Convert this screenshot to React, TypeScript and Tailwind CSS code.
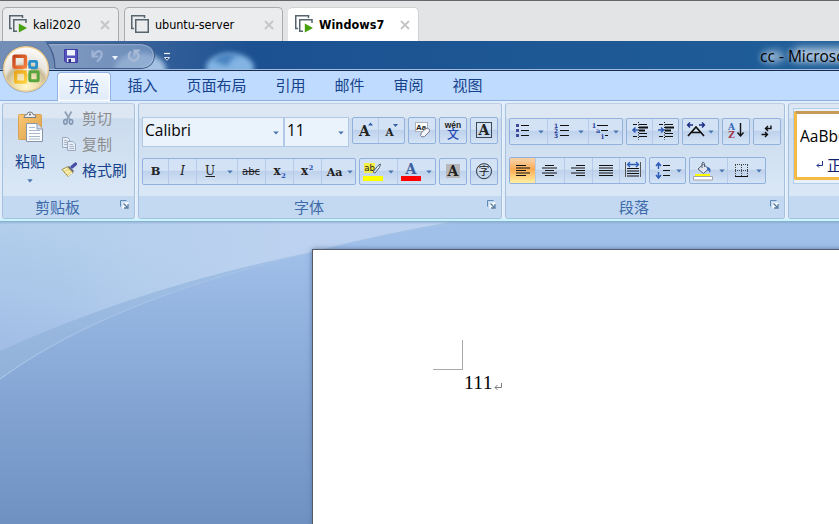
import React from "react";

const CJK = "font-['Noto_Sans_CJK_SC',sans-serif]";
const UI = "font-['Open_Sans','Noto_Sans_CJK_SC',sans-serif]";

/* ---------- virtual machine tab strip ---------- */

function VmIcon({ running }: { running?: boolean }) {
  return (
    <svg width="19" height="19" viewBox="0 0 19 19" fill="none" className="shrink-0">
      <path d="M13.5 3V.75H.75V13.5H3" stroke="#56646e" strokeWidth="1.5" />
      {running ? (
        <>
          <path d="M17 8V4.75H4.75V16.25H8" stroke="#56646e" strokeWidth="1.5" />
          <path d="M9.8 8.6L18 13.1L9.8 17.6Z" fill="#46a010" />
        </>
      ) : (
        <path d="M4.75 4.75H17.25V17.25H4.75Z" stroke="#56646e" strokeWidth="1.5" />
      )}
    </svg>
  );
}

function VmTab({ name, width, running, active }: { name: string; width: string; running?: boolean; active?: boolean }) {
  return (
    <div
      className={`flex h-[34px] items-center rounded-t-[5px] border border-b-0 pl-[6px] pr-2 ${width} ${
        active ? "border-[#d2d2d2] border-l-white bg-white" : "border-[#a9abad] bg-[#ebecee]"
      }`}
    >
      <VmIcon running={running} />
      <span
        className={`ml-[5px] flex-1 whitespace-nowrap font-['DejaVu_Sans_Condensed','DejaVu_Sans',sans-serif] text-[12.5px] leading-4 text-black [font-stretch:condensed] ${
          active ? "font-bold tracking-[0.05px]" : "tracking-[-0.05px]"
        }`}
      >
        {name}
      </span>
      <svg width="10" height="10" viewBox="0 0 10 10" className="shrink-0">
        <path d="M1 1L9 9M9 1L1 9" stroke="#c6c6c6" strokeWidth="1.9" />
      </svg>
    </div>
  );
}

/* ---------- title bar ---------- */

function OfficeButton() {
  return (
    <svg width="50" height="50" viewBox="0 0 50 50" className="absolute left-[1px] top-[44px] z-10">
      <defs>
        <radialGradient id="orb" cx=".5" cy=".88" r=".9">
          <stop offset="0" stopColor="#fff8cc" />
          <stop offset=".3" stopColor="#eedfae" />
          <stop offset=".5" stopColor="#c9bb98" />
          <stop offset=".6" stopColor="#e9e5dc" />
          <stop offset="1" stopColor="#ffffff" />
        </radialGradient>
        <linearGradient id="red" x2="1" y2="1">
          <stop stopColor="#c2431a" />
          <stop offset="1" stopColor="#f6813c" />
        </linearGradient>
        <linearGradient id="yel" x2="1" y2="1">
          <stop stopColor="#e9a51b" />
          <stop offset="1" stopColor="#ffd23c" />
        </linearGradient>
      </defs>
      <circle cx="25" cy="25" r="23.6" fill="#5f6f86" opacity=".55" />
      <circle cx="25" cy="25" r="22.3" fill="url(#orb)" stroke="#efcf92" strokeWidth="1.4" />
      <g fill="none">
        <rect x="13" y="12.3" width="11.4" height="11" rx="1" stroke="url(#red)" strokeWidth="3.4" />
        <rect x="28.6" y="17.4" width="7" height="6.4" rx=".8" stroke="#268fcc" strokeWidth="2.8" />
        <rect x="14.6" y="28" width="10" height="10.2" rx="1" stroke="url(#yel)" strokeWidth="3.3" />
        <rect x="28.8" y="27.8" width="8.4" height="9" rx="1" stroke="#57a53c" strokeWidth="3" />
      </g>
      <path d="M22.4 25.4H30M26.6 21.5V30" stroke="#f8efd6" strokeWidth="1.3" />
    </svg>
  );
}

function TitleBar() {
  return (
    <div className="relative flex h-[30px] shrink-0 items-center overflow-hidden border-b border-[#1a2c4c] bg-gradient-to-r from-[#5576a6] via-[#1c5191] via-30% to-[#1f5e98]">
      <svg className="absolute inset-0" width="839" height="29" viewBox="0 0 839 29">
        <defs>
          <filter id="soft" x="-50%" y="-50%" width="200%" height="200%">
            <feGaussianBlur stdDeviation="2.6" />
          </filter>
          <filter id="glow" x="-20%" y="-80%" width="140%" height="260%">
            <feGaussianBlur stdDeviation="5" />
          </filter>
          <linearGradient id="haze">
            <stop stopColor="#8aa0c4" stopOpacity=".85" />
            <stop offset="1" stopColor="#86a3cb" stopOpacity=".65" />
          </linearGradient>
        </defs>
        <path d="M0 0H45C51 8 54 18 55 28H0Z" fill="#8098bd" opacity=".7" />
        <ellipse cx="140" cy="29" rx="26" ry="17" fill="#b9d4f0" opacity=".85" filter="url(#soft)" />
        <ellipse cx="230" cy="27" rx="24" ry="15" fill="#8ebfec" opacity=".9" filter="url(#soft)" />
        <path d="M213 20Q223 9 239 15Q229 18 228 25" fill="#2f6db0" opacity=".7" filter="url(#soft)" />
        <path d="M47 2.5H141Q155 4 154.5 15Q154 26 142 27.5H55Q55 11 47 2.5Z" fill="url(#haze)" stroke="#3f5c88" />
        <path d="M50 3.7H141Q153.5 5 153.3 15Q153 25 142 26.3" fill="none" stroke="#b7cae4" strokeOpacity=".5" />
        <path d="M0 28.5H839" stroke="#9eb9df" />
        {/* save */}
        <path d="M64.5 8.5H77.5V21.5H66L64.5 20Z" fill="#5453bd" stroke="#3f3fa6" />
        <path d="M67 9H75V14.5H67Z" fill="#eef3ff" />
        <path d="M67 17H75V21H67Z" fill="#e4e6f4" />
        <path d="M68.5 18H71V21H68.5Z" fill="#29297c" />
        {/* undo */}
        <path d="M92.5 9.5V15.5H98.5M93 15Q98 7.5 101.5 11.5Q103 15.5 97 20.5" fill="none" stroke="#a0b4d6" strokeWidth="2.2" />
        <path d="M112 15H118L115 19Z" fill="#eef3fa" />
        {/* redo */}
        <path d="M131 10.5Q127.5 14 129.5 17.5Q133 21 137 18.5Q140.5 14.5 136 10.5M134.5 14.5V9.5H140" fill="none" stroke="#a9bad6" strokeWidth="2.2" />
        <path d="M164 12.5H170" stroke="#f0f4fa" strokeWidth="1.2" />
        <path d="M164.5 16.5H169.5L167 19.3Z" fill="#183861" stroke="#f0f4fa" strokeWidth=".9" />
        {/* glow under the window caption */}
        <path d="M765 11H782V20H765ZM794 7H850V20H794Z" fill="#cfdeee" opacity=".85" filter="url(#glow)" />
      </svg>
      <span className={`relative ml-[760px] whitespace-nowrap text-[15.5px] leading-5 text-black ${UI} [text-shadow:0_0_4px_#b5cce4]`}>
        cc - Microsoft Word
      </span>
    </div>
  );
}

/* ---------- ribbon building blocks ---------- */

const tabs = [
  { label: "插入", width: "w-[59px]" },
  { label: "页面布局", width: "w-[89px]" },
  { label: "引用", width: "w-[59px]" },
  { label: "邮件", width: "w-[59px]" },
  { label: "审阅", width: "w-[59px]" },
  { label: "视图", width: "w-[59px]" },
];

function RibbonTabs() {
  return (
    <div className={`flex h-[30px] shrink-0 items-end border-b border-[#8db2e3] bg-[#bfdbff] pl-[57px] text-[15px] text-[#15428b] ${CJK}`}>
      <div className="-mb-px flex h-[29px] w-[54px] items-center justify-center rounded-t-[4px] border border-b-0 border-[#8db2e3] bg-gradient-to-b from-[#f4f9ff] to-[#dfeaf8] pb-[2px] shadow-[inset_0_0_2px_1px_#ffffff]">
        开始
      </div>
      <div className="flex h-[29px] pl-[2px]">
        {tabs.map((t) => (
          <div key={t.label} className={`flex items-center justify-center whitespace-nowrap ${t.width}`}>
            {t.label}
          </div>
        ))}
      </div>
    </div>
  );
}

function Launcher() {
  return (
    <svg width="9" height="9" viewBox="0 0 9 9" className="absolute right-[5px] top-[4px]">
      <path d="M.5 6.5V.5H6.5" fill="none" stroke="#5f8bb5" />
      <path d="M2.5 2.5H8.5V8.5H2.5Z" fill="#fff" />
      <path d="M3.5 3.5L7 7M8 4V8H4" fill="none" stroke="#52789f" strokeWidth="1.3" />
    </svg>
  );
}

function Panel({ label, width, launcher, shift, children }: { label: string; width: string; launcher?: boolean; shift?: string; children: React.ReactNode }) {
  return (
    <section
      className={`flex h-[116px] shrink-0 flex-col overflow-hidden rounded-[3px] border border-[#a5c1dd] border-t-[#bccfe2] bg-gradient-to-b from-[#dce7f3] from-[12%] via-[#cbdbee] via-[13%] to-[#dae8f6] to-[82%] shadow-[1px_0_0_#eaf3fc] ${width}`}
    >
      <div className="h-[92px] shrink-0">{children}</div>
      <div className={`relative flex flex-1 items-center justify-center bg-[#c2d9f1] pb-[2px] text-[15px] leading-none text-[#3e6aaa] ${CJK}`}>
        <span className={shift}>{label}</span>
        {launcher && <Launcher />}
      </div>
    </section>
  );
}

function Cluster({ children }: { children: React.ReactNode }) {
  return (
    <div className="flex h-[27px] shrink-0 divide-x divide-[#b5cae8] overflow-hidden rounded-[2px] border border-[#92b1dc] bg-gradient-to-b from-[#d3e2f4] from-45% via-[#bfd2ec] via-50% to-[#d4e4f6]">
      {children}
    </div>
  );
}

/* One ribbon button; its glyph is drawn on a canvas as large as the button. */
function Tool({ w, active, arrow, children }: { w: number; active?: boolean; arrow?: number; children: React.ReactNode }) {
  return (
    <button className={`block h-[25px] shrink-0 ${active ? "bg-gradient-to-b from-[#f8cc9c] from-10% via-[#fbab50] via-45% to-[#fff0a2]" : ""}`}>
      <svg width={w} height="25" viewBox={`0 0 ${w} 25`} fill="none" className="block">
        {children}
        {arrow !== undefined && <path d={`M${arrow - 2.7} 11.5H${arrow + 2.7}L${arrow} 14.6Z`} fill="#4776b0" />}
      </svg>
    </button>
  );
}

const SERIF = "'DejaVu Serif', 'Liberation Serif', serif";

function Glyph({ x, y, size, fill = "#222", family = SERIF, weight = 700, italic, children }: { x: number; y: number; size: number; fill?: string; family?: string; weight?: number; italic?: boolean; children: string }) {
  return (
    <text x={x} y={y} fontSize={size} fill={fill} fontFamily={family} fontWeight={weight} fontStyle={italic ? "italic" : undefined} textAnchor="middle">
      {children}
    </text>
  );
}

function lines(rows: [number, number][]) {
  return rows.map(([a, b], i) => `M${a} ${7.5 + i * 2.5}H${b}`).join("");
}

/* ---------- clipboard ---------- */

function Clipboard() {
  return (
    <Panel label="剪贴板" width="w-[133px]" launcher shift="-translate-x-[11px]">
      <div className={`flex h-full text-[15px] text-[#15428b] ${CJK}`}>
        <div className="flex w-[53px] flex-col items-center pl-[1px] pt-[7px]">
          <svg width="30" height="32" viewBox="0 0 30 32" className="translate-x-[2px]">
            <defs>
              <linearGradient id="board" x2="1" y2="1">
                <stop stopColor="#fbc875" />
                <stop offset="1" stopColor="#dba048" />
              </linearGradient>
            </defs>
            <rect x="1.5" y="3.5" width="23" height="25" rx="1" fill="url(#board)" stroke="#d5a454" />
            <path d="M7 6.5Q7 3.5 10 3.5Q10 1 13 1Q16 1 16 3.5Q19 3.5 19 6.5Z" fill="#eeeeef" stroke="#777e87" />
            <circle cx="13" cy="3.4" r="1" fill="#5e646b" />
            <path d="M9.5 12.5H20L25.5 18V30.5H9.5Z" fill="#fafcff" stroke="#8795aa" />
            <path d="M20 12.5V18H25.5" fill="#d6e1f0" stroke="#8795aa" />
            <path d="M12 16.5H18M12 19.5H23M12 22.5H23M12 25.5H23M12 28H23" stroke="#a9b7ca" />
          </svg>
          <span className="mt-[7px] leading-[22px]">粘贴</span>
          <svg width="6" height="4" viewBox="0 0 6 4" className="mt-[7px]">
            <path d="M.3 .3H5.7L3 3.5Z" fill="#4776b0" />
          </svg>
        </div>
        <div className="flex flex-col pl-[5px] pt-[1px]">
          <div className="flex h-[26px] items-center gap-[5px] text-[#8d8d8d]">
            <svg width="16" height="16" viewBox="0 0 16 16" fill="none">
              <path d="M4 1.5L8.5 9.5M10.5 1.5L6 9.5" stroke="#93a3b8" strokeWidth="1.9" />
              <ellipse cx="4.4" cy="11.8" rx="1.7" ry="2.3" stroke="#8095b2" strokeWidth="1.6" />
              <ellipse cx="10" cy="11.8" rx="1.7" ry="2.3" stroke="#8095b2" strokeWidth="1.6" />
            </svg>
            剪切
          </div>
          <div className="flex h-[26px] items-center gap-[5px] text-[#8d8d8d]">
            <svg width="16" height="16" viewBox="0 0 16 16" fill="#e5ecf5" stroke="#9aaac0">
              <path d="M1.5 1.5H6.5L8.5 3.5V11.5H1.5Z" />
              <path d="M6.5 5.5H12L14.5 8V14.5H6.5Z" />
              <path d="M3 4.5H6M3 6.5H6M3 8.5H6M8.5 8.5H12M8.5 10.5H13M8.5 12.5H13" strokeWidth=".8" />
            </svg>
            复制
          </div>
          <div className="flex h-[26px] items-center gap-[5px]">
            <svg width="17" height="16" viewBox="0 0 17 16" className="-mr-px">
              <path d="M11 5L14.5 2" stroke="#4650a4" strokeWidth="3.2" strokeLinecap="round" />
              <path d="M8 4L13 9L11.5 10.5L6.5 5Z" fill="#596589" />
              <path d="M6.5 4.8L12 10.5L7 14.5L1 7.5Z" fill="#eee08c" stroke="#8d7b3c" strokeWidth=".8" />
              <path d="M2.5 8L6 6.5M4.5 11L9 9M7 14L11 11" stroke="#fffbd4" />
            </svg>
            格式刷
          </div>
        </div>
      </div>
    </Panel>
  );
}

/* ---------- font ---------- */

function Combo({ value, width }: { value: string; width: string }) {
  return (
    <div className={`flex h-[30px] items-center justify-between border border-[#b1c8e6] bg-[#eaf2fb] pl-[2px] pr-[4px] ${width}`}>
      <span className={`-mt-[2px] text-[15.5px] text-black ${UI}`}>{value}</span>
      <svg width="6" height="4" viewBox="0 0 6 4" className="translate-y-px">
        <path d="M.2 .4H5.8L3 3.6Z" fill="#4776b0" />
      </svg>
    </div>
  );
}

function FontPanel() {
  return (
    <Panel label="字体" width="w-[364px]" launcher shift="-translate-x-[11px]">
      <div className="flex h-full flex-col pl-[3px] pt-[13px]">
        <div className="flex h-[41px] items-start">
          <Combo value="Calibri" width="w-[142px]" />
          <Combo value="11" width="w-[65px]" />
          <div className="ml-[3px] flex gap-[3px]">
            <Cluster>
              <Tool w={25}>
                <Glyph x={11.5} y={18} size={14}>A</Glyph>
                <path d="M15 7.5H20L17.5 4.6Z" fill="#315fa8" />
              </Tool>
              <Tool w={25}>
                <Glyph x={10.5} y={18} size={10.5}>A</Glyph>
                <path d="M14 6H19L16.5 8.9Z" fill="#315fa8" />
              </Tool>
            </Cluster>
            <Cluster>
              <Tool w={26}>
                <rect x="6.5" y="4.5" width="12" height="9" fill="#fff" stroke="#aab1bb" />
                <Glyph x={12} y={12} size={8} family="Liberation Sans, sans-serif">Aa</Glyph>
                <path d="M12.5 14.5L17 10.5Q19 9.5 20.5 11.5Q21 13 20 14L15.5 18.5Q12.5 20 11.5 17.5Z" fill="#f5f6fb" stroke="#71788b" />
              </Tool>
            </Cluster>
            <Cluster>
              <Tool w={26}>
                <Glyph x={13} y={10} size={8.5} family="Liberation Sans, sans-serif">wén</Glyph>
                <Glyph x={13} y={20.5} size={12} fill="#2449b5" family="Noto Sans CJK SC, sans-serif" weight={500}>文</Glyph>
              </Tool>
            </Cluster>
            <Cluster>
              <Tool w={26}>
                <rect x="5.5" y="4.5" width="15" height="15" stroke="#3c4654" />
                <Glyph x={13} y={17} size={14}>A</Glyph>
              </Tool>
            </Cluster>
          </div>
        </div>
        <div className="flex gap-[3px]">
          <Cluster>
            <Tool w={25}><Glyph x={12.5} y={16} size={11.5}>B</Glyph></Tool>
            <Tool w={27}><Glyph x={13.5} y={16} size={12} weight={400} italic>I</Glyph></Tool>
            <Tool w={40} arrow={33}>
              <Glyph x={13} y={15.5} size={12} weight={400}>U</Glyph>
              <path d="M8.5 17.5H18" stroke="#222" />
            </Tool>
            <Tool w={27}>
              <Glyph x={13} y={16} size={10} weight={400} family="DejaVu Sans, sans-serif">abc</Glyph>
              <path d="M4.5 12.5H21.5" stroke="#222" />
            </Tool>
            <Tool w={27}>
              <Glyph x={11} y={16} size={12}>x</Glyph>
              <Glyph x={17.5} y={18.5} size={6.5} fill="#2449b5">2</Glyph>
            </Tool>
            <Tool w={27}>
              <Glyph x={10.5} y={16} size={12}>x</Glyph>
              <Glyph x={17} y={10.5} size={6.5} fill="#2449b5">2</Glyph>
            </Tool>
            <Tool w={33} arrow={28}><Glyph x={12.5} y={17} size={11}>Aa</Glyph></Tool>
          </Cluster>
          <Cluster>
            <Tool w={37} arrow={31}>
              <path d="M4 4H15V14H4Z" fill="#f5ee45" />
              <Glyph x={9.5} y={12} size={9.5} weight={400} family="DejaVu Sans Condensed, DejaVu Sans, sans-serif">ab</Glyph>
              <path d="M13 13L18 6.5L20.5 5L19.5 8.5L15 14Z" fill="#e0e6ed" stroke="#56657d" />
              <path d="M3 17H23V22H3Z" fill="#ffff00" />
            </Tool>
            <Tool w={37} arrow={31}>
              <Glyph x={13} y={15} size={14} fill="#3c5f9f">A</Glyph>
              <path d="M3 17H23V22H3Z" fill="#ff0000" />
            </Tool>
          </Cluster>
          <Cluster>
            <Tool w={26}>
              <path d="M6 5H20V19H6Z" fill="#b7b7b9" />
              <Glyph x={13} y={17} size={14}>A</Glyph>
            </Tool>
          </Cluster>
          <Cluster>
            <Tool w={26}>
              <circle cx="13" cy="12.2" r="7.5" stroke="#28323f" />
              <Glyph x={13} y={16.3} size={11} family="Noto Sans CJK SC, sans-serif" weight={400}>字</Glyph>
            </Tool>
          </Cluster>
        </div>
      </div>
    </Panel>
  );
}

/* ---------- paragraph ---------- */

const BLUE = "#2e5bb8";

function IndentLines() {
  return (
    <>
      <path d="M6 5.5H10M12 5.5H20M6 17.5H10M12 17.5H20M12 14.5H20" stroke="#111" />
      <path d="M12 8.5H21M12 11.5H18" stroke="#111" strokeWidth="2" />
      <path d="M11.5 3V21" stroke="#111" strokeDasharray="1 1.5" />
    </>
  );
}

function ParagraphPanel() {
  return (
    <Panel label="段落" width="w-[280px]" launcher shift="-translate-x-[11px]">
      <div className="flex h-full flex-col pl-[3px] pt-[14px]">
        <div className="flex h-[39px] items-start gap-[3px]">
          <Cluster>
            <Tool w={37} arrow={31}>
              <path d="M11 6.5H19M11 11.5H19M11 16.5H19" stroke="#111" />
              <path d="M6 6.5H9M6 11.5H9M6 16.5H9" stroke="#3f4b9d" strokeWidth="3" />
            </Tool>
            <Tool w={40} arrow={33}>
              <path d="M12 6.5H21M12 11.5H21M12 16.5H21" stroke="#111" />
              {["1", "2", "3"].map((n, i) => (
                <Glyph key={n} x={8} y={8.7 + i * 5} size={6} fill="#3046a0" family="DejaVu Sans, sans-serif">{n}</Glyph>
              ))}
            </Tool>
            <Tool w={33} arrow={27}>
              <path d="M8 6.5H19M12 11.5H19M16 16.5H19" stroke="#111" />
              <Glyph x={5} y={9} size={6.5} fill="#3046a0">1</Glyph>
              <Glyph x={9} y={13.5} size={6.5} fill="#3046a0">a</Glyph>
              <Glyph x={13.5} y={19.5} size={7} fill="#3046a0">i</Glyph>
            </Tool>
          </Cluster>
          <Cluster>
            <Tool w={25}>
              <IndentLines />
              <path d="M11 11H7M8.5 8.5L6 11L8.5 13.5" stroke={BLUE} strokeWidth="1.6" />
            </Tool>
            <Tool w={25}>
              <IndentLines />
              <path d="M5 11H10M8 8.5L10.5 11L8 13.5" stroke={BLUE} strokeWidth="1.6" />
            </Tool>
          </Cluster>
          <Cluster>
            <Tool w={35} arrow={28}>
              <path d="M5 17L13 8L21 17M8.5 13.5H17.5" stroke="#111" strokeWidth="1.7" />
              <path d="M5 6H10M7 3.5L4.5 6L7 8.5M16 6H21M19 3.5L21.5 6L19 8.5" stroke="#182a83" strokeWidth="1.3" />
            </Tool>
          </Cluster>
          <Cluster>
            <Tool w={26}>
              <Glyph x={8.5} y={10.5} size={9} fill="#3464b4">A</Glyph>
              <Glyph x={8.5} y={19} size={9} fill="#a13a4c">Z</Glyph>
              <path d="M17.5 4V17M14.5 13.5L17.5 17L20.5 13.5" stroke="#111" strokeWidth="1.4" />
            </Tool>
          </Cluster>
          <Cluster>
            <Tool w={26}>
              <path d="M17 6.5V9.5H11.5M14 7L11.5 9.5L14 12M7.5 15.5H13.5M11 13L13.5 15.5L11 18" stroke="#111" strokeWidth="1.4" />
            </Tool>
          </Cluster>
        </div>
        <div className="flex gap-[3px]">
          <Cluster>
            <Tool w={25} active>
              <path d={lines([[6, 16], [6, 20], [6, 16], [6, 20], [6, 16]])} stroke="#111" strokeWidth="1.1" />
            </Tool>
            <Tool w={28}>
              <path d={lines([[9, 18], [6, 21], [9, 18], [6, 21], [9, 18]])} stroke="#111" strokeWidth="1.1" />
            </Tool>
            <Tool w={27}>
              <path d={lines([[11, 20], [6, 20], [11, 20], [6, 20], [11, 20]])} stroke="#111" strokeWidth="1.1" />
            </Tool>
            <Tool w={26}>
              <path d={lines([[6, 20], [6, 20], [6, 20], [6, 20], [6, 20]])} stroke="#111" strokeWidth="1.1" />
            </Tool>
            <Tool w={25}>
              <path d="M5.5 4V19M20.5 4V19" stroke="#555" />
              <path d="M7 10.5H19M7 13H19M7 15.5H19M7 18H19" stroke="#111" strokeWidth="1.1" />
              <path d="M8 6.5H18M10 4L7.5 6.5L10 9M16 4L18.5 6.5L16 9" stroke={BLUE} strokeWidth="1.3" />
            </Tool>
          </Cluster>
          <Cluster>
            <Tool w={35} arrow={29}>
              <path d="M13 7.5H20M13 12.5H20M13 17.5H20" stroke="#111" />
              <path d="M8.5 5V11M6 8L8.5 5L11 8M8.5 14V20M6 17L8.5 20L11 17" stroke={BLUE} strokeWidth="1.5" />
            </Tool>
          </Cluster>
          <Cluster>
            <Tool w={37} arrow={32}>
              <path d="M8 11L13.5 6L18.5 11L13.5 15.5Z" fill="#dfe6ef" stroke="#506077" />
              <path d="M12 10V5Q13.5 3 14.5 5.5V9" stroke="#56647a" />
              <path d="M17 9Q22 9.5 20 15Q19 12 17 12" fill="#3b67b4" />
              <path d="M5 17H20" stroke="#ffff00" strokeWidth="2" />
              <path d="M3.5 18.5H22.5V22H3.5Z" fill="#fff" stroke="#a1a4aa" />
            </Tool>
            <Tool w={37} arrow={31}>
              <path d="M7.5 7V18M13.5 7V18M19.5 7V18M7 6.5H20M7 12.5H20" stroke="#444" strokeDasharray="1 1" />
              <path d="M7 18.5H20" stroke="#111" />
            </Tool>
          </Cluster>
        </div>
      </div>
    </Panel>
  );
}

/* ---------- styles gallery ---------- */

function StylesPanel() {
  return (
    <Panel label="" width="w-[300px]">
      <div className="ml-[4px] mt-[4px] h-[76px] border border-[#b3cee9] bg-[#e9f1fb] pt-[2px]">
        <div className="h-[69px] w-[96px] overflow-hidden rounded-[2px] border-[3px] border-[#f3ba45] border-t-[#c79a59] bg-white pl-[3px] pt-[12px] text-black">
          <div className={`whitespace-nowrap text-[15.5px] leading-[20px] ${UI}`}>AaBbCcDd</div>
          <div className={`flex items-center gap-[3px] pl-[16px] pt-[9px] text-[15px] leading-[20px] text-[#11236e] ${CJK}`}>
            <svg width="8" height="8" viewBox="0 0 8 8" fill="none" className="shrink-0">
              <path d="M6.5 0V4.5H1M3 2.5L1 4.5L3 6.5" stroke="#182e82" />
            </svg>
            <span className="whitespace-nowrap">正文</span>
          </div>
        </div>
      </div>
    </Panel>
  );
}

/* ---------- document ---------- */

function DocumentArea() {
  return (
    <div className="relative flex-1 overflow-hidden">
      <svg className="absolute inset-0" width="839" height="302" viewBox="0 0 839 302">
        <defs>
          <linearGradient id="low" gradientUnits="userSpaceOnUse" x1="0" y1="30" x2="0" y2="302">
            <stop stopColor="#a0c0ea" />
            <stop offset=".35" stopColor="#8eaedb" />
            <stop offset="1" stopColor="#6e91c2" />
          </linearGradient>
          <linearGradient id="sky" gradientUnits="userSpaceOnUse" x1="0" y1="130" x2="30" y2="0">
            <stop stopColor="#a1bce5" />
            <stop offset=".5" stopColor="#abc7e9" />
            <stop offset="1" stopColor="#b3cfec" />
          </linearGradient>
          <linearGradient id="skyRight" gradientUnits="userSpaceOnUse" x1="60" y1="40" x2="320" y2="0">
            <stop stopColor="#bdd2f0" stopOpacity="0" />
            <stop offset="1" stopColor="#bdd2f0" />
          </linearGradient>
        </defs>
        <path d="M0 0H839V302H0Z" fill="url(#low)" />
        <path d="M0 157Q110 77 313 30Q390 10 462 0H0Z" fill="#a3c3df" opacity=".35" />
        <path d="M0 129Q148 62 313 30Q385 11 450 0H0Z" fill="url(#sky)" />
        <path d="M0 129Q148 62 313 30Q385 11 450 0H0Z" fill="url(#skyRight)" />
        <path d="M0 157Q110 77 313 30Q390 10 462 0" fill="none" stroke="#a6c3e6" strokeWidth="1.1" />
        <path d="M0 0H839V1.5H0Z" fill="#7f9cc0" opacity=".35" />
      </svg>
      <div className="relative ml-[312px] mt-[27px] h-[300px] w-[600px] border border-[#555c66] bg-white pl-[120px] pt-[90px] shadow-[0_0_5px_#5c7aa6]">
        <div className="h-[30px] w-[30px] border-b border-r border-[#a9a9a9]" />
        <div className="flex items-center pl-[31px] pt-[3px] font-['Liberation_Serif',serif] text-[19.5px] leading-[20px] tracking-[0.3px] text-black">
          111
          <svg width="9" height="9" viewBox="0 0 9 9" fill="none" className="ml-px mt-[9px]">
            <path d="M7.5 0V4.5H1M3.5 2L1 4.5L3.5 7" stroke="#7d7d7d" />
          </svg>
        </div>
      </div>
    </div>
  );
}

export default function App() {
  return (
    <div className="relative flex h-[524px] w-[839px] flex-col overflow-hidden bg-[#e3e4e6]">
      <div className="flex h-[41px] shrink-0 items-end gap-[5px] border-t border-[#66676c] pl-[2px]">
        <VmTab name="kali2020" width="w-[117px]" running />
        <VmTab name="ubuntu-server" width="w-[159px]" />
        <VmTab name="Windows7" width="w-[131px]" running active />
      </div>
      <TitleBar />
      <OfficeButton />
      <RibbonTabs />
      <div className="flex h-[121px] shrink-0 gap-[3px] border-b border-[#88aed0] bg-[#e1edfa] pl-[2px] pt-[2px] shadow-[inset_0_-2px_0_#c9f5ff]">
        <Clipboard />
        <FontPanel />
        <div className="-ml-px flex gap-[3px] pl-[1px]">
          <ParagraphPanel />
          <StylesPanel />
        </div>
      </div>
      <DocumentArea />
    </div>
  );
}
